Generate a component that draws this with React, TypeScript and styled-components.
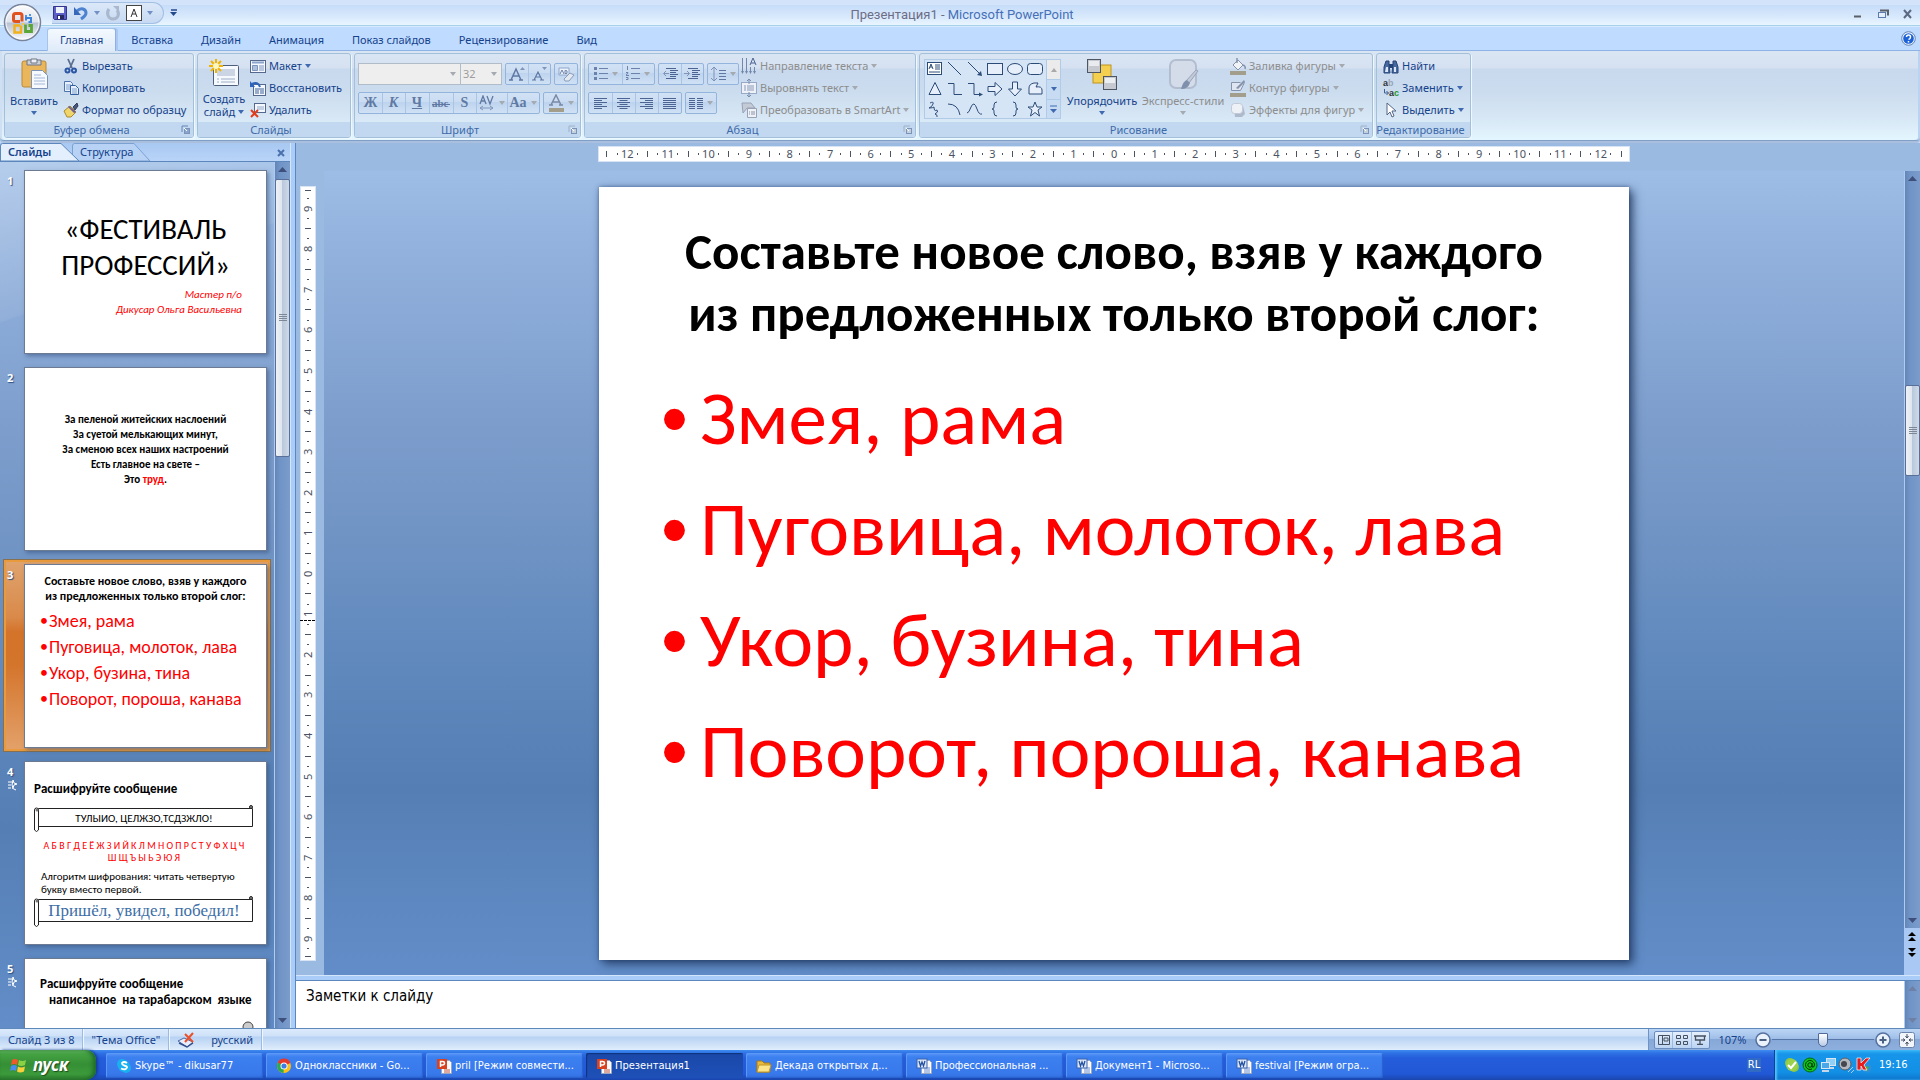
import React from 'react';
import styled, { createGlobalStyle, css } from 'styled-components';

const ui = '"Noto Sans", "Open Sans", sans-serif';
const tahoma = '"DejaVu Sans Condensed", "DejaVu Sans", sans-serif';
const calibri = 'Carlito, Lato, sans-serif';

const Global = createGlobalStyle`
  * { box-sizing: border-box; }
  html, body, #root { height: 100%; }
  body { margin: 0; overflow: hidden; font: 11px/14px ${ui}; color: #15428b; }
  button, input, select, textarea { font: inherit; color: inherit; margin: 0; padding: 0; border: 0; background: none; }
  button { display: flex; align-items: center; justify-content: center; }
  svg { display: block; flex: none; }
  ul, ol, p, h1, h2 { margin: 0; padding: 0; list-style: none; font-size: inherit; font-weight: inherit; }
`;

/* ---------- frame ---------- */
const Window = styled.div`
  height: 100vh; display: grid; grid-template-rows: auto auto auto 1fr auto auto; background: #bfdbff;
`;
const TitleBar = styled.header`
  position: relative; height: 27px; display: grid; grid-template-columns: 1fr auto 1fr; align-items: center;
  background: linear-gradient(#d3e4fa 0, #d3e4fa 5px, #c6dcf8 5px, #d7e8fc 16px, #e9f5ff 25px, #a5d2ea 25px, #a5d2ea 26px, #d6ebfd 26px);
`;
const Quick = styled.div`
  justify-self: start; align-self: start; margin: 2px 0 0 34px; height: 22px; padding-left: 18px; display: flex; align-items: center;
`;
const QuickPill = styled.div`
  display: flex; align-items: center; height: 22px; width: 112px; padding-right: 12px; gap: 5px;
  border: 1px solid #a3bfe4; border-left: 0; border-radius: 0 11px 11px 0; background: linear-gradient(#dbe8f8, #c7daf3);
`;
const QuickMore = styled.button`margin-left: 3px; width: 12px; height: 16px;`;
const OfficeButton = styled.button`
  position: absolute; left: 3px; top: 3px; z-index: 2; width: 39px; height: 39px;
`;
const Caption = styled.h1`
  font: 13px/18px Roboto, ${ui}; color: #6d6d86; padding: 2px 0 0 4px;
  span { color: #4670b8; }
`;
const WinButtons = styled.div`
  justify-self: end; display: flex; gap: 10px; padding-right: 5px;
  button { width: 15px; height: 16px; }
`;
const TabRow = styled.nav`
  height: 24px; display: flex; align-items: flex-end; gap: 4px; padding: 0 4px 0 48px; border-bottom: 1px solid #8db2e3;
  background: #bfdbff;
`;
const Tab = styled.button<{ $on?: boolean }>`
  height: 22px; padding: 0 12px; border: 1px solid transparent; border-width: 1px 0 0; border-radius: 3px 3px 0 0;
  ${p => p.$on && css`
    background: linear-gradient(#f4f9ff, #dfebf9); border-color: #a6c3ea; margin-bottom: -1px; height: 23px;
    box-shadow: -1px 0 #a6c3ea, 1px 0 #8fb0de, 3px 0 #a9c9f4;
  `}
`;
const Help = styled.button`margin: 0 0 4px auto;`;

/* ---------- ribbon ---------- */
const Ribbon = styled.section`
  margin: 0; padding: 2px 2px 2px 4px; display: flex; gap: 3px; border-bottom: 1px solid #7f9fc6; 
  border-radius: 0 0 4px 4px; box-shadow: inset -2px 0 #b8d4f5, inset 2px 0 #cfe0f4, 0 2px #a9bfdd;
  background: linear-gradient(#dbe6f4 0, #d5e1f1 17px, #c8d9ee 18px, #cbdcef 40px, #d6e6f4 65px, #e3f5ff 88px);
`;
const GroupBox = styled.div<{ $w: number }>`
  flex: 0 0 ${p => p.$w}px; border: 1px solid #a3c0db; border-radius: 3px; overflow: hidden; 
  box-shadow: 1px 1px #f0f8ff; display: flex; flex-direction: column;
`;
const GroupBody = styled.div`height: 68px; display: flex; padding: 1px 4px 0;`;
const GroupLabel = styled.div`
  height: 15px; background: #c1d8f0; color: #3e6aaa; display: flex; align-items: center; line-height: 15px; padding-right: 3px;
  span { flex: 1; text-align: center; white-space: nowrap; margin-left: -3px; }
`;
const Big = styled.button<{ $w: number; $off?: boolean }>`
  width: ${p => p.$w}px; flex-direction: column; justify-content: flex-start; padding-top: 3px; line-height: 13px;
  color: ${p => (p.$off ? '#8d8d8d' : '#15428b')}; white-space: nowrap;
  > svg:first-child { margin-bottom: 4px; }
  > svg:last-child { margin-top: 4px; }
  span { display: flex; align-items: center; gap: 3px; }
`;
const Stack = styled.div<{ $ml?: number }>`
  display: flex; flex-direction: column; margin-left: ${p => p.$ml ?? 0}px; height: 66px;
`;
const Small = styled.button<{ $off?: boolean }>`
  height: 22px; gap: 3px; justify-content: flex-start; white-space: nowrap; color: ${p => (p.$off ? '#8d8d8d' : '#15428b')};
`;
const Tools = styled.div`display: flex; flex-direction: column; gap: 7px; padding-top: 8px; margin-left: -1px;`;
const ToolRow = styled.div`display: flex; gap: 3px;`;
const Seg = styled.div`
  display: flex; height: 22px; border: 1px solid #93b4dc; border-radius: 2px;
  background: linear-gradient(#d2e2f5 0, #cadcf2 45%, #bdd3ee 46%, #d0e1f4);
`;
const SegBtn = styled.button<{ $w: number }>`
  width: ${p => p.$w}px; gap: 4px; color: #6079a3; font: bold 14px/16px "Liberation Serif", serif;
  & + & { box-shadow: inset 1px 0 #a9c4e4; }
`;
const Combo = styled.span<{ $w: number }>`
  width: ${p => p.$w}px; height: 22px; display: flex; align-items: center; background: #eeeeee; border: 1px solid #b1bcc9;
  padding-right: 4px; color: #9d9d9d;
  & + & { margin-left: -4px; }
  select { appearance: none; flex: 1; min-width: 0; height: 20px; padding-left: 2px; opacity: 1; }
`;
const Gallery = styled.div`
  margin: 4px 5px 0 0; width: 137px; height: 60px; border: 1px solid #b0cbe8; background: #d6e5f6; display: flex;
`;
const Shapes = styled.div`flex: 1; display: grid; grid-template-columns: repeat(6, 20px); grid-template-rows: repeat(3, 20px); align-content: center;
  button { width: 20px; height: 20px; }
`;
const GalleryNav = styled.div`
  width: 14px; display: grid; grid-template-rows: repeat(3, 1fr); border-left: 1px solid #b0cbe8;
  button + button { border-top: 1px solid #b0cbe8; background: #c7dbf3; }
  button:first-child { background: #ebebeb; }
`;

/* ---------- work area ---------- */
const ground = 'linear-gradient(#9dbde6 0, #94b3de 8%, #7f9fce 29%, #7094c4 45%, #5f88bd 62%, #557fb4 77%, #628dc8 100%)';
const Work = styled.main`min-height: 0; margin-top: 2px; display: grid; grid-template-columns: 290px 6px 1fr;`;
const Side = styled.aside`min-height: 0; display: grid; grid-template-rows: 19px 1fr;`;
const SideTabs = styled.div`
  display: flex; align-items: flex-end; background: linear-gradient(#a8c8f2, #b9d4f7); border-bottom: 1px solid #5b87bd; padding-right: 5px;
`;
const SideTab = styled.button<{ $on?: boolean }>`
  position: relative; height: 18px; width: ${p => (p.$on ? 79 : 80)}px; justify-content: flex-start; padding-left: 8px;
  font-weight: ${p => (p.$on ? 600 : 400)}; z-index: ${p => (p.$on ? 1 : 0)}; margin-right: -7px;
  svg { position: absolute; left: 0; top: 0; z-index: -1; }
`;
const SideClose = styled.button`margin: 0 0 4px auto;`;
const SideBody = styled.div`
  min-height: 0; display: grid; grid-template-columns: 1fr 16px;
  background: linear-gradient(160deg, #ffffff40 0, #ffffff10 150px, transparent 152px), ${ground};
`;
const Thumbs = styled.ol`overflow: hidden; padding: 3px 3px 0; display: flex; flex-direction: column; gap: 4px;`;
const ThumbRow = styled.li<{ $on?: boolean }>`
  flex: none; height: 193px; padding: 5px 4px 4px 1px; display: grid; grid-template-columns: 20px 1fr;
  ${p => p.$on && css`
    background: linear-gradient(#dfa46f 0, #d98a4a 30%, #d4732a 38%, #d4752c 55%, #e3a26b 100%);
    box-shadow: inset 0 0 0 1px #87704f, inset 0 0 0 3px #e89a3c;
  `}
`;
const ThumbNo = styled.div`
  color: #fff; font-weight: 700; padding: 4px 0 0 3px; text-shadow: 1px 1px 1px #2f4f80;
  svg { margin-top: 1px; }
`;
const Thumb = styled.div`
  min-width: 0; background: #fff; border: 1px solid #6c7a92; box-shadow: 2px 2px 4px #2c477480; overflow: hidden; color: #000;
  font: 11px/15px ${calibri};
`;
const ThumbOne = styled(Thumb)`
  padding: 40px 24px 0;
  h2 { font-size: 29px; line-height: 36px; text-align: center; white-space: nowrap; }
  p { color: #f00; font-style: italic; text-align: right; }
  h2 + p { margin-top: 4px; }
`;
const ThumbTwo = styled(Thumb)`padding-top: 44px; text-align: center; font-weight: 700; b { color: #f00; }`;
const ThumbThree = styled(Thumb)`
  padding-top: 9px;
  h2 { font-size: 12px; font-weight: 700; text-align: center; }
  ul { margin: 4px 0 0 15px; color: #f00; font-size: 18px; line-height: 26px; white-space: nowrap; }
  li { display: flex; height: 26px; }
  li::before { content: '•'; width: 9px; font-size: 16px; }
`;
const ThumbFour = styled(Thumb)`
  padding: 18px 12px 0 9px;
  h2 { font-size: 13px; line-height: 17px; font-weight: 700; white-space: nowrap; }
`;
const Scroll = styled.div<{ $mt: number; $serif?: boolean }>`
  position: relative; margin: ${p => p.$mt}px 0 0; height: ${p => (p.$serif ? 26 : 22)}px; display: flex; justify-content: center; align-items: center;
  white-space: nowrap; color: ${p => (p.$serif ? '#3c6ea6' : '#000')};
  font: ${p => (p.$serif ? '17px/24px "Liberation Serif", serif' : `11px/15px ${calibri}`)};
  svg { position: absolute; inset: 0; width: 100%; height: 100%; overflow: visible; }
  span { position: relative; }
`;
const Letters = styled.p`margin-top: 11px; line-height: 12px; font-size: 10px; color: #f00; text-align: center; white-space: nowrap;`;
const Rule = styled.p`margin: 6px 0 0 7px; line-height: 13px; white-space: nowrap;`;
const ThumbFive = styled(Thumb)`
  position: relative; padding: 17px 0 0 15px; font-size: 13px; line-height: 16px; font-weight: 700; white-space: nowrap;
  p { padding-left: 9px; white-space: pre; }
  svg { position: absolute; right: 12px; top: 62px; }
`;
const Splitter = styled.div<{ $row?: boolean }>`
  background: #a9ccf8;
  box-shadow: ${p => (p.$row ? 'inset 0 1px #d4e6fb, inset 0 -1px #5b87bd' : 'inset 1px 0 #d4e6fb, inset -1px 0 #5b87bd')};
`;
const Editor = styled.section`min-width: 0; min-height: 0; display: grid; grid-template-rows: minmax(0, 1fr) 6px 47px;`;
const Canvas = styled.div`
  min-height: 0; min-width: 0; display: grid; grid-template-columns: 28px 1fr 16px; grid-template-rows: 28px minmax(0, 1fr); background: #9bbae2;
`;
const RulerTop = styled.div`grid-column: 2; display: flex; justify-content: center; padding-top: 4px;`;
const RulerSide = styled.div`grid-area: 2 / 1; display: flex; justify-content: center; padding: 16px 4px 15px 0; position: relative;`;
const Pointer = styled.i`position: absolute; left: 4px; width: 15px; top: 449px; border-top: 1px dashed #000;`;
const RulerStrip = styled.div<{ $v?: boolean }>`
  display: flex; background: #fff; box-shadow: 0 0 0 1px #d8e4f4; color: #4a5363; font: 11px/14px "Noto Sans", sans-serif;
  ${p => (p.$v
    ? css`width: 14px; height: 100%; writing-mode: vertical-rl; transform: rotate(180deg);`
    : css`width: 65.2%; height: 14px; padding: 0 3px;`)}
`;
const Mark = styled.span<{ $end?: boolean }>`
  flex: ${p => (p.$end ? 0.6 : 1)} 1 0; min-width: 0; min-height: 0; display: flex; align-items: center; justify-content: center;
`;
const Tick = styled.i<{ $long?: boolean }>`
  inline-size: 1px; block-size: ${p => (p.$long ? 6 : 2)}px; background: #4a5363; flex: none;
`;
const Stage = styled.div`
  grid-area: 2 / 2; min-width: 0; min-height: 0; background: ${ground}; padding-top: 16px; display: flex; justify-content: center; align-items: flex-start;
`;
const Slide = styled.article`
  width: 65.2%; aspect-ratio: 1030 / 773; background: #fff; color: #000; font-family: ${calibri}; padding: 34px 0 0;
  box-shadow: 4px 4px 9px #1c335acc, 0 0 4px #2c4c80aa; overflow: hidden;
  h2 { font-size: 51px; line-height: 62px; font-weight: 700; text-align: center; white-space: nowrap; }
  ul { margin: 18px 0 0 62px; color: #f00; font-size: 77px; line-height: 111px; white-space: nowrap; }
  li { display: flex; height: 111px; }
  li::before { content: '•'; width: 39px; font-family: "Liberation Sans", sans-serif; }
`;
const Bar = styled.div`
  min-height: 0; display: flex; flex-direction: column; border-left: 1px solid #aecbf0; background: linear-gradient(90deg, #6484b6, #6f93c6 30%, #7b9ccb);
  button { height: 15px; flex: none; }
`;
const Gap = styled.div<{ $n: number }>`flex: ${p => p.$n} 1 0;`;
const Grip = styled.div<{ $n: number }>`
  flex: ${p => p.$n} 1 0; border: 1px solid #5a6f98; border-radius: 2px; display: flex; align-items: center; justify-content: center;
  background: linear-gradient(90deg, #eef2f7, #dfe5ee 45%, #b9c8dc 50%, #cfdae8);
`;
const BarColumn = styled.div`grid-area: 2 / 3; min-height: 0; display: grid; grid-template-rows: 1fr 47px;`;
const Jump = styled.div`
  background: #a9c8f3; display: flex; flex-direction: column; padding: 1px 0 0; align-items: center;
  button { height: 16px; }
`;
const Notes = styled.div`display: grid; grid-template-columns: 1fr 16px; background: #fff;
  textarea { font: 15px/18px ${tahoma}; color: #000; padding: 6px 10px; resize: none; outline: 0; }
`;

/* ---------- status bar and taskbar ---------- */
const Status = styled.footer`
  height: 22px; display: flex; align-items: stretch; border-top: 1px solid #5f88bb;
  background: linear-gradient(#dceafc 0, #cfe1f8 7px, #b7d2f4 8px, #cfe2f8 16px, #e1eefc);
`;
const Cell = styled.div`
  display: flex; align-items: center; padding: 0 8px; gap: 16px; border-right: 1px solid #9bbbe3; box-shadow: 1px 0 #eef6ff; white-space: nowrap;
`;
const StatusRight = styled.div`
  margin-left: auto; display: flex; align-items: center; padding: 0 5px; border-left: 1px solid #6f93c6;
  background: linear-gradient(#bcd5f5, #a0bfe8 45%, #86a8d8 50%, #8fb0dd);
`;
const Views = styled.div`
  display: flex; width: 56px; height: 18px; border: 1px solid #6a8cc0; border-radius: 2px; background: linear-gradient(#e3effd, #bcd4f3);
  button { flex: 1; } button + button { border-left: 1px solid #9cb9df; }
`;
const Percent = styled.button`width: 45px;`;
const Zoom = styled.input`
  appearance: none; width: 102px; height: 16px; margin: 0 1px; background: linear-gradient(#5676a8, #5676a8) center / 100% 1px no-repeat;
  &::-webkit-slider-thumb { appearance: none; width: 10px; height: 14px; border: 1px solid #50699a; border-radius: 1px 1px 5px 5px; background: linear-gradient(#fff, #b9cbe6); }
`;
const Fit = styled.button`margin-left: 8px;`;
const Taskbar = styled.nav`
  height: 30px; display: flex; align-items: stretch; font: 11px/14px ${tahoma}; color: #fff;
  background: linear-gradient(#3f8cf0 0, #2f72e4 3px, #245ddb 8px, #2158d6 24px, #1a45ad 30px);
`;
const Start = styled.button`
  width: 96px; border-radius: 0 10px 10px 0; gap: 6px; justify-content: flex-start; padding-left: 10px;
  background: linear-gradient(#6fbf6c 0, #45a343 4px, #358f35 14px, #3c9a3b 24px, #2c7a2c); box-shadow: inset -3px 0 4px #1e6b2a, 2px 0 3px #153d9c;
  font: italic 700 17px/20px "Noto Sans", sans-serif; text-shadow: 1px 1px 1px #1d4d1d;
`;
const Tasks = styled.div`flex: 1; min-width: 0; display: flex; gap: 3px; padding: 3px 0 2px 10px;`;
const Task = styled.button<{ $on?: boolean }>`
  flex: 0 1 157px; min-width: 0; justify-content: flex-start; gap: 3px; padding: 0 8px 0 10px; border-radius: 2px; white-space: nowrap; overflow: hidden;
  background: ${p => (p.$on ? 'linear-gradient(#1a48a8, #1e50b8)' : 'linear-gradient(#5a97f8, #3c80f0 4px, #3879ec 20px, #3270e0)')};
  box-shadow: ${p => (p.$on ? 'inset 1px 1px 1px #10317c' : 'inset -1px -1px 1px #2b62cc, inset 1px 1px #5b98f8')};
`;
const Lang = styled.button`width: 14px; margin: 8px 13px 8px 0; background: #316ac5;`;
const Tray = styled.div`
  display: flex; align-items: center; width: 146px; padding-left: 9px; gap: 2px; border-left: 1px solid #0e3f9c;
  background: linear-gradient(#35b4f5 0, #1795ea 4px, #1290e6 22px, #0f74cc); box-shadow: inset 2px 0 2px #4cc3f8;
  time { margin-left: 5px; }
`;

/* ---------- drawings ---------- */
const I = ({ w = 16, h = 16, children, vb }: { w?: number; h?: number; children: React.ReactNode; vb?: string }) => (
  <svg width={w} height={h} viewBox={vb ?? `0 0 ${w} ${h}`} aria-hidden="true">{children}</svg>
);
const Down = ({ c = '#3f6ab0', up }: { c?: string; up?: boolean }) => (
  <I w={6} h={4}><path d={up ? 'M0 4h6L3 0z' : 'M0 0h6L3 4z'} fill={c} /></I>
);
const DownOff = () => <Down c="#a5a9b0" />;
const Launcher = ({ off }: { off?: boolean }) => (
  <I w={9} h={9}><path d="M1 7V1h6" fill="none" stroke={off ? '#9fb0c8' : '#6484b6'} /><rect x="3.500" y="3.500" width="5" height="5" fill={off ? '#c5d0df' : '#8ba5cc'} stroke="#7b93b8" /><path d="M3 3l3 3" stroke="#fff" /></I>
);
const Bars = ({ x, dx = 0, w = 13 }: { x: 'l' | 'c' | 'r' | 'j'; dx?: number; w?: number }) => (
  <g stroke="#4c6491" strokeWidth="1">
    {[1, 3, 5, 7, 9, 11].map((y, i) => {
      const len = x === 'j' || i % 2 === 0 ? w : w - 5;
      const s = x === 'c' ? (w - len) / 2 : x === 'r' ? w - len : 0;
      return <path key={y} d={`M${dx + s} ${y + 0.5}h${len}`} />;
    })}
  </g>
);

const icons = {
  office: (
    <I w={39} h={39}>
      <defs><linearGradient id="ob" x2="0" y2="1"><stop stopColor="#fdfdfe" /><stop offset=".48" stopColor="#dfe3ec" /><stop offset=".52" stopColor="#b9c2d3" /><stop offset="1" stopColor="#fbfcfe" /></linearGradient></defs>
      <circle cx="19.500" cy="19.500" r="18" fill="url(#ob)" stroke="#77849c" strokeWidth="1.500" />
      <circle cx="19.500" cy="19.500" r="16.500" fill="none" stroke="#fff" opacity=".8" />
      <g fill="none" strokeWidth="3">
        <path d="M17 18.500h-4.500q-2 0-2-2v-4q0-2 2-2h4.500q2 0 2 2v6" stroke="#e0531f" />
        <path d="M23 17.500v-2.500h5v4h-2.500" stroke="#3a83d8" strokeWidth="2" />
        <path d="M17 22.500h-5.500v7h6.500v-7" stroke="#f1b11c" strokeWidth="2.500" /><path d="M22.500 21.500v7h6v-6h-3" stroke="#5aa636" strokeWidth="2.800" />
      </g>
      <g fill="#4f97e0"><path d="M22 12h2v2h-2zM26 11h2v2h-2z" /></g><path d="M19 20h2v2h-2z" fill="#f7c843" />
    </I>
  ),
  save: <I><path d="M1.500 1.500h13v13h-12l-1-1z" fill="#5b5fc7" stroke="#33358c" /><path d="M4 2h8v6H4z" fill="#eef2fb" /><path d="M5 10h7v4H5z" fill="#272a5e" /><path d="M6 11h2v3H6z" fill="#fff" /></I>,
  undo: <I><path d="M4 6c4-4 9-2 9 2 0 2-2 4-5 6" fill="none" stroke="#4c82cf" strokeWidth="3" /><path d="M1 2v8h7z" fill="#3568b8" /></I>,
  redo: <I><path d="M4 4c-3 4-1 10 4 10s7-5 4-9" fill="none" stroke="#a9b8cd" strokeWidth="3" /><path d="M8 1h6v6z" fill="#a9b8cd" /></I>,
  boxA: <I><rect x=".5" y=".5" width="15" height="15" fill="#fff" stroke="#444" /><path d="M5 12l3-8 3 8M6 9h4" fill="none" stroke="#333" /></I>,
  more: <I w={7} h={8}><path d="M1 1h6" stroke="#23488c" strokeWidth="1.500" /><path d="M0 3h7L3.500 7z" fill="#23488c" /></I>,
  min: <I w={15}><path d="M4 10.500h7" stroke="#5b5f66" strokeWidth="2" /></I>,
  restore: <I w={15}><path d="M5 4.500h8v5" fill="none" stroke="#5b5f66" strokeWidth="2" /><rect x="3.500" y="6.500" width="7" height="5" fill="#e5effb" stroke="#5b7bab" /></I>,
  close: <I w={15}><path d="M4 4l7 8M11 4l-7 8" stroke="#5c6980" strokeWidth="2" /></I>,
  help: <I w={15} h={15}><circle cx="7.500" cy="7.500" r="6.800" fill="#e9f2ff" stroke="#6583b5" /><circle cx="7.500" cy="7.500" r="5.300" fill="#1e62d8" /><path d="M5.500 6q0-2 2-2t2 2-2 2.500M7.500 10v1.500" fill="none" stroke="#fff" strokeWidth="1.500" /></I>,
  paste: (
    <I w={30} h={32}><rect x="3" y="3" width="24" height="26" rx="2" fill="#e9b65b" stroke="#b98a38" /><path d="M8 2h14v5H8z" fill="#c9ced8" stroke="#6f7683" /><path d="M12 1h6v4h-6z" fill="#eceff5" stroke="#6f7683" />
      <path d="M12.500 12.500h11l5 5v13h-16z" fill="#f6f9fe" stroke="#7b93b8" /><path d="M15 17h7M15 20h11M15 23h11M15 26h11" stroke="#a4b9d8" /></I>
  ),
  cut: <I><path d="M5 1l4 9M11 1L7 10" stroke="#5b6f90" strokeWidth="1.800" /><g fill="none" stroke="#2c56a4" strokeWidth="2"><circle cx="4.500" cy="12.500" r="2" /><circle cx="11" cy="12.500" r="2" /></g></I>,
  copy: <I><path d="M1.500 1.500h6l2 2v8h-8z" fill="#e7f0fc" stroke="#4d74ae" /><path d="M3 5h5M3 7h5M3 9h5" stroke="#7da0d0" /><path d="M7.500 5.500h5l3 3v6h-8z" fill="#e7f0fc" stroke="#345f9f" /><path d="M9 9h5M9 11h5M9 13h5" stroke="#7da0d0" /></I>,
  brush: <I><path d="M10 5l4-4 1 3-3 4z" fill="#48577b" stroke="#2e3c5e" /><path d="M1 9l6-5 6 6-5 5-4 0z" fill="#f0d56a" stroke="#a88a2c" /><path d="M6 4l7 6-2 1-6-6z" fill="#6a5b9a" /></I>,
  newSlide: (
    <I w={32} h={30}><rect x="5.500" y="7.500" width="25" height="20" rx="1" fill="#f6f9fe" stroke="#50607c" /><path d="M9 11h18v7H9z" fill="#cbd5e4" /><path d="M9 21h2M13 21h14M9 24h2M13 24h14" stroke="#9dadc6" />
      <g stroke="#f0b400" strokeWidth="2"><path d="M8 1v14M1 8h14M3 3l10 10M13 3L3 13" /></g><circle cx="8" cy="8" r="3" fill="#fff7c0" /></I>
  ),
  layout: <I><rect x=".5" y="2.500" width="15" height="12" fill="#f5f9ff" stroke="#55698f" /><path d="M2 4.500h12" stroke="#8aa3cb" strokeWidth="2" /><path d="M2.500 7.500h5v5h-5z" fill="#aebfdb" stroke="#7c93bb" /><path d="M9 8h5M9 10h5M9 12h5" stroke="#7c93bb" /></I>,
  reset: <I><rect x="3.500" y="4.500" width="12" height="11" fill="#f5f9ff" stroke="#55698f" /><path d="M5 9h9M5 11h4M10 11h4M5 13h4M10 13h4" stroke="#7c93bb" strokeWidth="1.500" /><path d="M2 4q6-3 8 3" fill="none" stroke="#2d63ba" strokeWidth="2" /><path d="M0 1v6h5z" fill="#2d63ba" /></I>,
  del: <I><rect x="4.500" y="1.500" width="11" height="9" fill="#f5f9ff" stroke="#55698f" /><path d="M7 4h7v4H7z" fill="#c3cfe2" /><path d="M1 8l7 7M8 8l-7 7" stroke="#e23b1c" strokeWidth="2" /></I>,
  clear: <I w={18} h={18}><path d="M2 3h10v7H2z" fill="#eef3fb" stroke="#8da6cc" /><path d="M3 9l2-4 2 4M8 5.500q3 0 2 1.500 1 2-2 1.500z" stroke="#6b82aa" fill="none" /><path d="M7 14l6-6 4 2-5 6-4 0z" fill="#e3e8f1" stroke="#8a9cbb" /></I>,
  bullets: <I w={14}><g stroke="#6b82aa"><path d="M5 2.500h9M5 7.500h9M5 12.500h9" /></g><g fill="#6b82aa"><path d="M0 1h3v3H0zM0 6h3v3H0zM0 11h3v3H0z" /></g></I>,
  numbers: <I w={14}><g stroke="#6b82aa" fill="none"><path d="M5 2.500h9M5 7.500h9M5 12.500h9M1.500 0v4M0 6.500h2l-2 3h3M0 11.500h2v2H0" /></g></I>,
  outdent: <I w={16} h={14}><path d="M4 1.500h10M8 3.500h8M8 5.500h6M8 7.500h8M8 9.500h6M4 11.500h10" stroke="#4c6491" /><path d="M7 6.500H2M4 4L1.500 6.500 4 9" fill="none" stroke="#8094b8" /></I>,
  indent: <I w={16} h={14}><path d="M4 1.500h10M8 3.500h8M8 5.500h6M8 7.500h8M8 9.500h6M4 11.500h10" stroke="#4c6491" /><path d="M0 6.500h5M3 4l2.500 2.500L3 9" fill="none" stroke="#8094b8" /></I>,
  spacing: <I w={15}><path d="M3 1v14M0 4l3-3 3 3M0 12l3 3 3-3" fill="none" stroke="#7c92b8" /><path d="M8 4.500h7M8 7.500h7M8 10.500h7M8 13.500h7" stroke="#5f77a2" /></I>,
  columns: <I w={14} h={13}><Bars x="j" w={6} /><Bars x="j" dx={8} w={6} /></I>,
  av: <I w={16} h={16}><path d="M1 9l3-8 3 8M2 6h4M8 1l3 8 3-8" fill="none" stroke="#6079a3" strokeWidth="1.300" /><path d="M1 13h13M4 11l-3 2 3 2M11 11l3 2-3 2" fill="none" stroke="#7f96bb" /></I>,
  fontColor: <I w={16} h={18}><path d="M3 11L8 1l5 10M5 8h6M1 11h4M11 11h4" fill="none" stroke="#7a8aa6" strokeWidth="1.500" /><path d="M1 14h15v4H1z" fill="#a39d8c" /></I>,
  dir: <I w={16} h={18}><path d="M1.500 1v14M5.500 1v14M9.500 10v6M13.500 10v6" stroke="#7387ab" /><path d="M9 8l3-7 3 7M10 6h4" fill="none" stroke="#4c6491" /><path d="M0 14l1.500 3L3 14M4 14l1.500 3L7 14M8 14l1.500 3 1.500-3M12 14l1.500 3 1.500-3" fill="#7387ab" /></I>,
  valign: <I w={16} h={18}><rect x=".5" y="3.500" width="15" height="11" fill="#eef2f8" stroke="#97a9c6" /><path d="M3 7h2M6 7h7M3 9h2M6 9h7M3 11h2M6 11h7" stroke="#8899b7" /><path d="M8 0v5M6 2l2-2 2 2M8 13v5M6 16l2 2 2-2" stroke="#7b8dae" fill="none" /></I>,
  smart: <I w={16} h={18}><path d="M1 2h9l4 5H6L2 12z" fill="#c4cad6" stroke="#98a2b4" /><path d="M6.500 7.500h9v9h-9z" fill="#eef1f6" stroke="#98a2b4" /><path d="M8 11h1M10 11h4M8 13h1M10 13h4" stroke="#8a94a8" /></I>,
  arrange: <I w={32} h={32}><rect x="7" y="7" width="18" height="18" fill="#f5cf4f" stroke="#bd9420" /><rect x="1.500" y="1.500" width="13" height="13" fill="#c6cad0" stroke="#4e5663" /><path d="M3 3h10v5H3z" fill="#e9ebee" /><rect x="17.500" y="18.500" width="13" height="13" fill="#c6cad0" stroke="#4e5663" /><path d="M19 20h10v5H19z" fill="#eceff1" /></I>,
  express: <I w={32} h={32}><rect x="3" y="2" width="26" height="28" rx="6" fill="#d4dcea" stroke="#b3bdd0" strokeWidth="2" /><path d="M31 13L22 25l-3-2 10-11z" fill="#c3cad8" stroke="#98a4ba" /><path d="M14 31q7 0 9-6l-3-3q-4 1-6 9z" fill="#7f90ad" /></I>,
  fill: <I w={16} h={18}><path d="M3 8l5-5 5 5-5 5z" fill="#f1f3f7" stroke="#8593ad" /><path d="M7 6V1M13 8q3 1 2 4" stroke="#8593ad" fill="none" strokeWidth="1.500" /><path d="M0 14h16v4H0z" fill="#a39d8c" /></I>,
  outline: <I w={16} h={18}><path d="M1.500 3.500h9M1.500 3.500v8h9l4-8" fill="#dfe6f1" stroke="#8593ad" /><path d="M6 9l8-8 1 2-7 7z" fill="#8593ad" /><path d="M0 14h16v4H0z" fill="#a39d8c" /></I>,
  effects: <I w={16} h={18}><path d="M4 5h9l2 8-3 3H5z" fill="#aeb9cc" /><rect x="1.500" y="2.500" width="11" height="10" rx="3" fill="#eef1f6" stroke="#c0c9d8" /></I>,
  find: <I><g fill="#46699f" stroke="#274478"><path d="M3 3h3v3l1 9H1V9z" /><path d="M10 3h3l2 6v6H9l1-9z" /></g><path d="M6 6h4v4H6z" fill="#274478" /><path d="M3 9h2v5H2zM11 9h2v5h-2z" fill="#dbe7f8" /></I>,
  select: <I><path d="M4 1v12l3-3 2 5 2-1-2-5h4z" fill="#fff" stroke="#556688" /></I>,
  star: <I w={10} h={11}><path d="M1 2h4M1 5h3M1 8h3M6 0l1 3 3 1-3 1-1 3-1-3zM5 8l4 2" stroke="#fff" fill="none" /></I>,
  spell: <I w={18}><path d="M1 9l6-3 9 4-6 5z" fill="#e9eefc" stroke="#4a69a5" /><path d="M2 11l8 4 6-4" fill="none" stroke="#35508c" strokeWidth="1.500" /><path d="M8 2l8 8M16 1L8 10" stroke="#e8502c" strokeWidth="2" /></I>,
};

const taskIcons: Record<string, React.ReactNode> = {
  skype: <I><circle cx="6" cy="6" r="5" fill="#1ab0ef" /><circle cx="10" cy="10" r="5" fill="#1ab0ef" /><circle cx="8" cy="8" r="6" fill="#1ab0ef" /><path d="M11 5q-3-2-5 0 0 2 2 2.500 3 .5 3 2-1 3-6 1" fill="none" stroke="#fff" strokeWidth="1.800" /></I>,
  chrome: <I><circle cx="8" cy="8" r="7" fill="#fbc116" /><path d="M8 8L1.500 5A7 7 0 0 1 14.500 5z" fill="#e33b2e" /><path d="M8 8L2 4.500A7 7 0 0 0 7.500 15z" fill="#2da94f" /><circle cx="8" cy="8" r="3.500" fill="#fff" /><circle cx="8" cy="8" r="2.600" fill="#3d7de8" /></I>,
  ppt: <I><path d="M5.500 2.500h8l2 2v11h-10z" fill="#fbfcff" stroke="#9aa7c2" /><path d="M8 12h6M8 14h6" stroke="#c2553a" /><rect x="1" y="1" width="10" height="10" fill="#d9421f" /><path d="M4.500 9V3.500h2q2 0 2 1.700t-2 1.700h-2" fill="none" stroke="#fff" strokeWidth="1.500" /></I>,
  folder: <I><path d="M1 3h5l2 2h6v9H1z" fill="#e9b93c" stroke="#a87a14" /><path d="M3 7h12l-2 7H1z" fill="#fbe48c" stroke="#c09426" /></I>,
  word: <I><path d="M5.500 2.500h8l2 2v11h-10z" fill="#fbfcff" stroke="#9aa7c2" /><path d="M8 10h6M8 12h6M8 14h6" stroke="#6d8fce" /><rect x="1" y="1" width="10" height="9" fill="#dce8fa" stroke="#3c62ab" /><path d="M3 3l1.500 5L6 4l1.500 4L9 3" fill="none" stroke="#2450a0" strokeWidth="1.300" /></I>,
};

const line = { fill: 'none', stroke: '#2c4c78' };
const solid = { fill: '#e6effa', stroke: '#2c4c78' };
const shapes: [string, React.ReactNode][] = [
  ['Надпись', <><rect x="2.500" y="3.500" width="14" height="12" stroke="#2c4c78" fill="#fff" /><path d="M4 10l2-5 2 5M5 8h2M10 6h5M10 8h5M10 10h5M4 13h11" {...line} /></>],
  ['Линия', <path d="M3 3l13 13" {...line} />],
  ['Стрелка', <><path d="M3 3l12 12" {...line} /><path d="M17 17l-5-1 4-4z" fill="#2c4c78" /></>],
  ['Прямоугольник', <rect x="2.500" y="4.500" width="15" height="11" {...solid} />],
  ['Овал', <ellipse cx="10" cy="10" rx="7.500" ry="5.500" {...solid} />],
  ['Скругленный прямоугольник', <rect x="2.500" y="4.500" width="15" height="11" rx="3" {...solid} />],
  ['Треугольник', <path d="M10 3.500l6 12H4z" {...solid} />],
  ['Уступ', <path d="M3 4.500h6v11h8" {...line} />],
  ['Уступ со стрелкой', <><path d="M3 4.500h6v11h6" {...line} /><path d="M18 15.500l-4-2v4z" fill="#2c4c78" /></>],
  ['Стрелка вправо', <path d="M3 7.500h7v-4l7 6.500-7 6.500v-4H3z" {...solid} />],
  ['Стрелка вниз', <path d="M7.500 3v7h-4l6.500 7 6.500-7h-4V3z" {...solid} />],
  ['Полилиния', <path d="M4 15V9q0-4 5-5h4l-2 4q6-1 6 3v4z" {...solid} />],
  ['Рисованная кривая', <path d="M5 4q4-2 3 1T4 9q4 0 5-1 0 5 3 3 2 2-2 4 3 1 2 3" {...line} />],
  ['Дуга', <path d="M3 5q10 0 12 11" {...line} />],
  ['Кривая', <path d="M2 14q2 0 4-6 3-7 6 2 2 6 5 5" {...line} />],
  ['Левая скобка', <path d="M12 3q-3 0-3 3v2q0 2-2 2 2 0 2 2v2q0 3 3 3" {...line} />],
  ['Правая скобка', <path d="M8 3q3 0 3 3v2q0 2 2 2-2 0-2 2v2q0 3-3 3" {...line} />],
  ['Звезда', <path d="M10 3l2 5h5l-4 3 1.500 6L10 13.500 5.500 17 7 11 3 8h5z" {...solid} />],
];

/* ---------- pieces ---------- */
const Group = ({ w, label, children, launch }: { w: number; label: string; children: React.ReactNode; launch?: 'on' | 'off' }) => (
  <GroupBox $w={w}><GroupBody>{children}</GroupBody><GroupLabel><span>{label}</span>{launch && <Launcher off={launch === 'off'} />}</GroupLabel></GroupBox>
);

const marks = (max: number) => {
  const out: React.ReactNode[] = [];
  const last = max * 4 + 2;
  for (let q = -last; q <= last; q++) {
    const m = Math.abs(q) % 4;
    const end = max === 9 && Math.abs(q) === last;
    out.push(<Mark key={q} $end={end}>{m === 0 ? Math.abs(q) / 4 : <Tick $long={m === 2} />}</Mark>);
  }
  return out;
};

const ScrollBar = ({ at, size, rest, off }: { at?: number; size?: number; rest?: number; off?: boolean }) => (
  <Bar>
    <button aria-label="Вверх"><I w={9} h={5}><path d="M0 5h9L4.500 0z" fill={off ? '#6f80a6' : '#3f4f7c'} /></I></button>
    {size ? <><Gap $n={at!} /><Grip $n={size}><I w={8} h={8}><path d="M0 .5h8M0 2.500h8M0 4.500h8M0 6.500h8" stroke="#7d8796" /></I></Grip><Gap $n={rest!} /></> : <Gap $n={1} />}
    <button aria-label="Вниз"><I w={9} h={5}><path d="M0 0h9L4.500 5z" fill={off ? '#6f80a6' : '#3f4f7c'} /></I></button>
  </Bar>
);

const Parchment = ({ w, h }: { w: number; h: number }) => (
  <svg viewBox={`0 0 ${w} ${h}`} preserveAspectRatio="none" aria-hidden="true">
    <path d={`M4.500 1.500H${w - 1.5}V${h - 2.5}H4.500z`} fill="#fff" stroke="#222" />
    <path d={`M.5 3q0-2 2-2t2 2v${h - 2}q-2 3-4 0z`} fill="#fff" stroke="#222" />
    <circle cx={w - 3} cy="0" r="1.500" fill="#888" stroke="#222" /><circle cx="3" cy="3" r="1.500" fill="#777" />
  </svg>
);

const words = ['Змея, рама', 'Пуговица, молоток, лава', 'Укор, бузина, тина', 'Поворот, пороша, канава'];
const menu = ['Главная', 'Вставка', 'Дизайн', 'Анимация', 'Показ слайдов', 'Рецензирование', 'Вид'];
const tasks: [string, string][] = [
  ['skype', 'Skype™ - dikusar77'], ['chrome', 'Одноклассники - Go...'], ['ppt', 'pril [Режим совмести...'], ['ppt', 'Презентация1'],
  ['folder', 'Декада открытых д...'], ['word', 'Профессиональная ...'], ['word', 'Документ1 - Microso...'], ['word', 'festival [Режим огра...'],
];

const LetterSwap = styled.svg`overflow: visible; font: 700 9px "Liberation Sans", sans-serif;`;
const ReplaceIcon = () => (
  <LetterSwap width="16" height="18" viewBox="0 0 16 18" aria-hidden="true">
    <text x="0" y="7" fill="#333">a<tspan fill="#9aa4b4">b</tspan></text>
    <text x="6" y="17" fill="#333">a<tspan fill="#1c9a2c">c</tspan></text>
    <path d="M1.500 10v4h4M3.500 12l2 2-2 2" fill="none" stroke="#3f5f95" />
  </LetterSwap>
);

export default function App() {
  return (
    <Window>
      <Global />
      <TitleBar>
        <OfficeButton aria-label="Кнопка Office">{icons.office}</OfficeButton>
        <Quick>
          <QuickPill>
            <button aria-label="Сохранить">{icons.save}</button>
            <button aria-label="Отменить">{icons.undo}</button>
            <Down c="#7191c4" />
            <button aria-label="Повторить">{icons.redo}</button>
            <button aria-label="Шрифт">{icons.boxA}</button>
            <Down c="#7191c4" />
          </QuickPill>
          <QuickMore aria-label="Настройка панели">{icons.more}</QuickMore>
        </Quick>
        <Caption>Презентация1 - <span>Microsoft PowerPoint</span></Caption>
        <WinButtons>
          <button aria-label="Свернуть">{icons.min}</button>
          <button aria-label="Восстановить окно">{icons.restore}</button>
          <button aria-label="Закрыть">{icons.close}</button>
        </WinButtons>
      </TitleBar>
      <TabRow>
        {menu.map((m, i) => <Tab key={m} $on={i === 0}>{m}</Tab>)}
        <Help aria-label="Справка">{icons.help}</Help>
      </TabRow>
      <Ribbon>
        <Group w={190} label="Буфер обмена" launch="on">
          <Big $w={50}>{icons.paste}<span>Вставить</span><Down /></Big>
          <Stack $ml={4}>
            <Small>{icons.cut}Вырезать</Small>
            <Small>{icons.copy}Копировать</Small>
            <Small>{icons.brush}Формат по образцу</Small>
          </Stack>
        </Group>
        <Group w={154} label="Слайды">
          <Big $w={44}>{icons.newSlide}<span>Создать</span><span>слайд <Down /></span></Big>
          <Stack $ml={4}>
            <Small>{icons.layout}Макет <Down /></Small>
            <Small>{icons.reset}Восстановить</Small>
            <Small>{icons.del}Удалить</Small>
          </Stack>
        </Group>
        <Group w={227} label="Шрифт" launch="off">
          <Tools>
            <ToolRow>
              <Combo $w={103}><select aria-label="Шрифт" disabled><option /></select><DownOff /></Combo>
              <Combo $w={42}><select aria-label="Размер шрифта" disabled><option>32</option></select><DownOff /></Combo>
              <Seg><SegBtn $w={22} aria-label="Увеличить размер">
                <I w={16} h={16}><path d="M2 14L7 3l5 11M4 10h6M0 14h4M10 14h4" fill="none" stroke="#6079a3" strokeWidth="1.500" /><path d="M11 4h5l-2.500-3z" fill="#7f96bb" /></I>
              </SegBtn><SegBtn $w={22} aria-label="Уменьшить размер">
                <I w={16} h={16}><path d="M3 14l4-8 4 8M5 11h4M1 14h4M9 14h4" fill="none" stroke="#6079a3" strokeWidth="1.200" /><path d="M11 1h5l-2.500 3z" fill="#7f96bb" /></I>
              </SegBtn></Seg>
              <Seg><SegBtn $w={22} aria-label="Очистить формат">{icons.clear}</SegBtn></Seg>
            </ToolRow>
            <ToolRow>
              <Seg>
                <SegBtn $w={23}>Ж</SegBtn><SegBtn $w={23}><i>К</i></SegBtn><SegBtn $w={24}><u>Ч</u></SegBtn>
                <SegBtn $w={24} aria-label="Зачеркнутый"><I w={18} h={12}><text x="0" y="10" fontFamily="Liberation Serif" fontSize="11" fill="#6079a3">abc</text><path d="M0 7.500h18" stroke="#6079a3" /></I></SegBtn>
                <SegBtn $w={23}>S</SegBtn>
                <SegBtn $w={31} aria-label="Интервал">{icons.av}<DownOff /></SegBtn>
                <SegBtn $w={32}>Aa<DownOff /></SegBtn>
              </Seg>
              <Seg><SegBtn $w={33} aria-label="Цвет текста">{icons.fontColor}<DownOff /></SegBtn></Seg>
            </ToolRow>
          </Tools>
        </Group>
        <Group w={332} label="Абзац" launch="off">
          <Tools>
            <ToolRow>
              <Seg><SegBtn $w={33} aria-label="Маркеры">{icons.bullets}<DownOff /></SegBtn><SegBtn $w={32} aria-label="Нумерация">{icons.numbers}<DownOff /></SegBtn></Seg>
              <Seg><SegBtn $w={22} aria-label="Уменьшить уровень">{icons.outdent}</SegBtn><SegBtn $w={22} aria-label="Увеличить уровень">{icons.indent}</SegBtn></Seg>
              <Seg><SegBtn $w={30} aria-label="Междустрочный интервал">{icons.spacing}<DownOff /></SegBtn></Seg>
            </ToolRow>
            <ToolRow>
              <Seg>{(['l', 'c', 'r', 'j'] as const).map(a => <SegBtn key={a} $w={23} aria-label={'Выравнивание ' + a}><I w={14} h={13}><Bars x={a} /></I></SegBtn>)}</Seg>
              <Seg><SegBtn $w={30} aria-label="Колонки">{icons.columns}<DownOff /></SegBtn></Seg>
            </ToolRow>
          </Tools>
          <Stack $ml={2}>
            <Small $off>{icons.dir}Направление текста <DownOff /></Small>
            <Small $off>{icons.valign}Выровнять текст <DownOff /></Small>
            <Small $off>{icons.smart}Преобразовать в SmartArt <DownOff /></Small>
          </Stack>
        </Group>
        <Group w={454} label="Рисование" launch="off">
          <Gallery>
            <Shapes>{shapes.map(([n, s]) => <button key={n} aria-label={n}><I w={20} h={20}>{s}</I></button>)}</Shapes>
            <GalleryNav>
              <button aria-label="Ряд вверх"><Down c="#a9a9a9" up /></button><button aria-label="Ряд вниз"><Down /></button>
              <button aria-label="Все фигуры"><I w={7} h={8}><path d="M0 1h7" stroke="#3f6ab0" /><path d="M0 4h7L3.500 8z" fill="#3f6ab0" /></I></button>
            </GalleryNav>
          </Gallery>
          <Big $w={72}>{icons.arrange}<span>Упорядочить</span><Down /></Big>
          <Big $w={90} $off>{icons.express}<span>Экспресс-стили</span><DownOff /></Big>
          <Stack $ml={2}>
            <Small $off>{icons.fill}Заливка фигуры <DownOff /></Small>
            <Small $off>{icons.outline}Контур фигуры <DownOff /></Small>
            <Small $off>{icons.effects}Эффекты для фигур <DownOff /></Small>
          </Stack>
        </Group>
        <Group w={95} label="Редактирование">
          <Stack $ml={2}>
            <Small>{icons.find}Найти</Small>
            <Small><ReplaceIcon />Заменить <Down /></Small>
            <Small>{icons.select}Выделить <Down /></Small>
          </Stack>
        </Group>
      </Ribbon>

      <Work>
        <Side>
          <SideTabs>
            <SideTab $on><I w={80} h={18}><path d="M.5 18V3q0-2.500 2-2.500H61l18 17.500z" fill="#e3effd" stroke="#5b87bd" /></I>Слайды</SideTab>
            <SideTab><I w={80} h={18}><path d="M.5 18V3q0-2.500 2-2.500H62l16 17.500z" fill="#b7d2f5" stroke="#7ba1d3" /></I>Структура</SideTab>
            <SideClose aria-label="Закрыть область"><I w={8} h={8}><path d="M1 1l6 6M7 1L1 7" stroke="#4a71ad" strokeWidth="2" /></I></SideClose>
          </SideTabs>
          <SideBody>
            <Thumbs>
              <ThumbRow>
                <ThumbNo>1</ThumbNo>
                <ThumbOne><h2>«ФЕСТИВАЛЬ<br />ПРОФЕССИЙ»</h2><p>Мастер п/о</p><p>Дикусар Ольга Васильевна</p></ThumbOne>
              </ThumbRow>
              <ThumbRow>
                <ThumbNo>2</ThumbNo>
                <ThumbTwo><p>За пеленой житейских наслоений</p><p>За суетой мелькающих минут,</p><p>За сменою всех наших настроений</p><p>Есть главное на свете –</p><p>Это <b>труд</b>.</p></ThumbTwo>
              </ThumbRow>
              <ThumbRow $on>
                <ThumbNo>3</ThumbNo>
                <ThumbThree><h2>Составьте новое слово, взяв у каждого<br />из предложенных только второй слог:</h2><ul>{words.map(w => <li key={w}>{w}</li>)}</ul></ThumbThree>
              </ThumbRow>
              <ThumbRow>
                <ThumbNo>4{icons.star}</ThumbNo>
                <ThumbFour>
                  <h2>Расшифруйте сообщение</h2>
                  <Scroll $mt={10}><Parchment w={220} h={22} /><span>ТУЛЫИО, ЦЕЛЖЗО,ТСДЗЖЛО!</span></Scroll>
                  <Letters>А Б В Г Д Е Ё Ж З И Й К Л М Н О П Р С Т У Ф Х Ц Ч<br />Ш Щ Ъ Ы Ь Э Ю Я</Letters>
                  <Rule>Алгоритм шифрования: читать четвертую<br />букву вместо первой.</Rule>
                  <Scroll $mt={2} $serif><Parchment w={220} h={26} /><span>Пришёл, увидел, победил!</span></Scroll>
                </ThumbFour>
              </ThumbRow>
              <ThumbRow>
                <ThumbNo>5{icons.star}</ThumbNo>
                <ThumbFive>Расшифруйте сообщение<p>{'написанное  на тарабарском  языке'}</p><I w={12} h={12}><circle cx="6" cy="6" r="5" fill="#ccc" stroke="#444" /></I></ThumbFive>
              </ThumbRow>
            </Thumbs>
            <ScrollBar at={2} size={277} rest={557} />
          </SideBody>
        </Side>
        <Splitter />
        <Editor>
          <Canvas>
            <RulerTop><RulerStrip>{marks(12)}</RulerStrip></RulerTop>
            <RulerSide><RulerStrip $v>{marks(9)}</RulerStrip><Pointer /></RulerSide>
            <Stage>
              <Slide>
                <h2>Составьте новое слово, взяв у каждого<br />из предложенных только второй слог:</h2>
                <ul>{words.map(w => <li key={w}>{w}</li>)}</ul>
              </Slide>
            </Stage>
            <BarColumn>
              <ScrollBar at={200} size={89} rest={438} />
              <Jump>
                <button aria-label="Предыдущий слайд"><I w={8} h={10}><path d="M0 4h8L4 0zM0 9h8L4 5z" fill="#000" /></I></button>
                <button aria-label="Следующий слайд"><I w={8} h={10}><path d="M0 0h8L4 4zM0 5h8L4 9z" fill="#000" /></I></button>
              </Jump>
            </BarColumn>
          </Canvas>
          <Splitter $row />
          <Notes><textarea aria-label="Заметки" defaultValue="Заметки к слайду" /><ScrollBar off /></Notes>
        </Editor>
      </Work>

      <Status>
        <Cell>Слайд 3 из 8</Cell>
        <Cell>"Тема Office"</Cell>
        <Cell>{icons.spell}русский</Cell>
        <StatusRight>
          <Views>
            <button aria-label="Обычный"><I w={12} h={10}><path d="M.5.5h11v9H.5zM4.500 1v8M6 3h4v3H6z" fill="none" stroke="#46505f" /></I></button>
            <button aria-label="Сортировщик"><I w={12} h={10}><path d="M.5.5h4v3h-4zM7.500.5h4v3h-4zM.5 6.500h4v3h-4zM7.500 6.500h4v3h-4z" fill="none" stroke="#46505f" /></I></button>
            <button aria-label="Показ слайдов"><I w={12} h={10}><path d="M0 1h12M1.500 1v4h9V1M6 5v4M3 9.500h6" fill="none" stroke="#46505f" strokeWidth="1.300" /></I></button>
          </Views>
          <Percent>107%</Percent>
          <button aria-label="Уменьшить"><I><circle cx="8" cy="8" r="7" fill="#eaf2fc" stroke="#56719f" strokeWidth="1.500" /><path d="M4.500 8h7" stroke="#4b5f83" strokeWidth="2" /></I></button>
          <Zoom type="range" min={0} max={100} defaultValue={50} aria-label="Масштаб" />
          <button aria-label="Увеличить"><I><circle cx="8" cy="8" r="7" fill="#eaf2fc" stroke="#56719f" strokeWidth="1.500" /><path d="M4.500 8h7M8 4.500v7" stroke="#4b5f83" strokeWidth="2" /></I></button>
          <Fit aria-label="Вписать слайд"><I><rect x=".5" y=".5" width="15" height="15" rx="2" fill="#f2f6fc" stroke="#6b84ab" /><path d="M8 2v4M8 10v4M2 8h4M10 8h4M6.500 4L8 6l1.500-2M6.500 12L8 10l1.500 2M4 6.500L6 8 4 9.500M12 6.500L10 8l2 1.500" fill="none" stroke="#46505f" /></I></Fit>
        </StatusRight>
      </Status>
      <Taskbar>
        <Start>
          <I w={17} h={17}><path d="M2 3q3-2 6 0L7 8Q4 6 1 8z" fill="#f0592a" /><path d="M9 3q3 2 7 0l-1 5q-4 2-7 0z" fill="#8bd145" /><path d="M1 9q3-2 6 0l-1 5q-3-2-6 0z" fill="#4a8cf0" /><path d="M8 9.500q3 2 7 0l-1 5q-4 2-7 0z" fill="#f9cf3a" /></I>
          пуск
        </Start>
        <Tasks>{tasks.map(([ic, t], i) => <Task key={t} $on={i === 3}>{taskIcons[ic]}{t}</Task>)}</Tasks>
        <Lang>RL</Lang>
        <Tray>
          <I><circle cx="6" cy="6" r="5" fill="#8dc63f" /><circle cx="10" cy="10" r="5" fill="#8dc63f" /><circle cx="8" cy="8" r="6" fill="#9bd14a" /><path d="M4 8l3 3 5-6" fill="none" stroke="#fff" strokeWidth="2" /></I>
          <I><circle cx="8" cy="8" r="7" fill="#12c41e" stroke="#056a0c" /><circle cx="8" cy="8" r="2.200" fill="none" stroke="#03320a" /><path d="M10 6v4q2 1 2.500-2A4.500 4.500 0 1 0 10 12" fill="none" stroke="#03320a" /></I>
          <I><rect x="6.500" y="1.500" width="9" height="7" fill="#8fd0f7" stroke="#dbe6f5" /><path d="M8 10h6v2H8z" fill="#c9d5e8" /><rect x="1.500" y="5.500" width="8" height="6" fill="#4aa8e8" stroke="#dbe6f5" /><path d="M2 13h7v2H2z" fill="#c9d5e8" /></I>
          <I><circle cx="7" cy="7" r="6" fill="#b4b7bd" stroke="#5b5e65" /><circle cx="6" cy="7" r="3" fill="#44474e" /><path d="M10 15l5-5M13 16l3-3" stroke="#b9c9ff" /></I>
          <I><circle cx="11" cy="11" r="4.500" fill="#2c8fd8" /><path d="M9 9l4 1-2 4-3-2z" fill="#47b04a" /><path d="M1 1h4v5l5-5h4L8 8l3 5H7L5 9v4H1z" fill="#e81c1c" stroke="#fff" strokeWidth=".7" /></I>
          <time>19:16</time>
        </Tray>
      </Taskbar>
    </Window>
  );
}
